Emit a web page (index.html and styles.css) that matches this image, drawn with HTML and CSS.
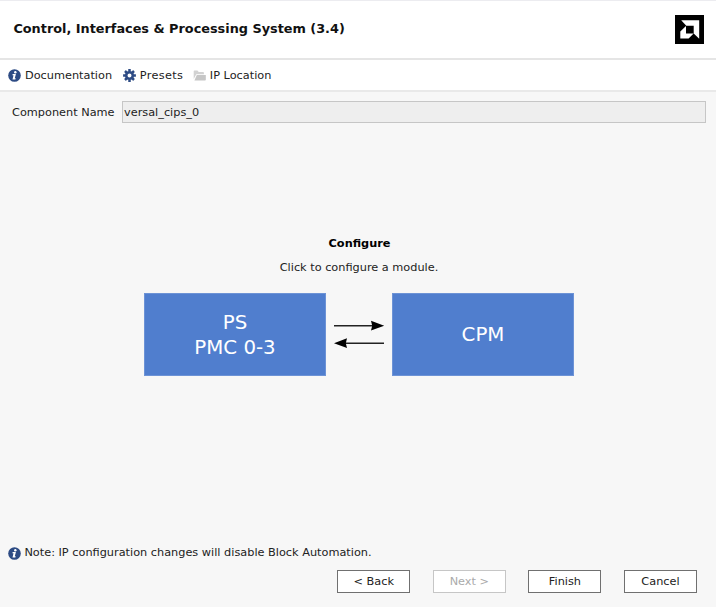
FILE: index.html
```html
<!DOCTYPE html>
<html lang="en">
<head>
<meta charset="utf-8">
<title>Control, Interfaces &amp; Processing System</title>
<link rel="stylesheet" href="styles.css">
</head>
<body>
<svg width="0" height="0" class="defs" aria-hidden="true">
  <symbol id="info" viewBox="0 0 13 13">
    <circle cx="6.5" cy="6.5" r="6.3" fill="#2d4b84"/>
    <circle cx="7.3" cy="3.2" r="1.2" fill="#fff"/>
    <path d="M4.7 5.1H7.9L6.8 9.2H7.7L7.4 10.4H4.5L5.5 6.3H4.4Z" fill="#fff"/>
  </symbol>
</svg>
<div class="dialog">
  <header class="header">
    <h1 class="title">Control, Interfaces &amp; Processing System (3.4)</h1>
    <svg class="logo" viewBox="0 0 29 29">
      <path d="M0 0H29V29H0Z" fill="#000"/>
      <path d="M6.2 5.3H24.2V23.7L18.7 18.5V10.7H11.3ZM11 11V18.6H18.6L13.6 23.6H5.3V16.4Z" fill="#fff"/>
    </svg>
  </header>
  <nav class="toolbar">
    <a class="tool"><svg class="icon" viewBox="0 0 13 13"><use href="#info"/></svg><span>Documentation</span></a>
    <a class="tool presets"><svg class="icon" viewBox="0 0 13 13">
      <g stroke="#2d4b84" fill="none">
        <circle cx="6.5" cy="6.5" r="3.3" stroke-width="2.6"/>
        <path d="M6.5 .1V2.6M6.5 10.4V12.9M.1 6.5H2.6M10.4 6.5H12.9M2 2L3.8 3.8M9.2 9.2L11 11M11 2L9.2 3.8M3.8 9.2L2 11" stroke-width="2.5"/>
      </g></svg><span>Presets</span></a>
    <a class="tool"><svg class="icon" viewBox="0 0 13 13">
      <path d="M.7 10V2.2Q.7 1.5 1.4 1.5H4.5L5.7 3H10.2Q10.9 3 10.9 3.8V5.2H3.3Z" fill="#d2d2d2"/>
      <path d="M3.8 6.1H12.8V10.8Q12.8 11.5 12 11.5H1.4Z" fill="#c6c6c6"/>
      </svg><span>IP Location</span></a>
  </nav>
  <div class="field">
    <label for="name">Component Name</label>
    <div class="input" id="name">versal_cips_0</div>
  </div>
  <main class="main">
    <h2 class="heading">Configure</h2>
    <p class="hint">Click to configure a module.</p>
    <div class="modules">
      <div class="module"><span>PS</span><span>PMC 0-3</span></div>
      <svg class="arrows" viewBox="0 0 66 82">
        <path d="M8 32.7H50M16 50.2H58" stroke="#222" stroke-width="1.4"/>
        <path d="M45 27.8L58.2 32.7L45 37.6L46.2 32.7ZM21 45.3L8 50.2L21 55.1L19.8 50.2Z" fill="#000"/>
      </svg>
      <div class="module"><span>CPM</span></div>
    </div>
  </main>
  <div class="note"><svg class="icon" viewBox="0 0 13 13"><use href="#info"/></svg><span>Note: IP configuration changes will disable Block Automation.</span></div>
  <footer class="footer">
    <button class="button">&lt; Back</button>
    <button class="button" disabled>Next &gt;</button>
    <button class="button">Finish</button>
    <button class="button">Cancel</button>
  </footer>
</div>
</body>
</html>
```
FILE: styles.css
```css
* { box-sizing: border-box; }
body {
  margin: 0;
  background: #f7f7f7;
  color: #222;
  font: 11.3px/16px "DejaVu Sans", sans-serif;
}
.defs { display: block; height: 0; }
.dialog { display: flex; flex-direction: column; width: 716px; height: 607px; overflow: hidden; }
.header {
  display: flex;
  align-items: center;
  justify-content: space-between;
  height: 60px;
  padding: 0 12px 0 13.4px;
  background: #fff;
  border-top: 1px solid #ececf0;
  border-bottom: 2px solid #e5e5e5;
}
.title { margin: 0 0 1px; font-size: 12.83px; line-height: 18px; color: #111; }
.logo { width: 29px; height: 29px; }
.toolbar {
  display: flex;
  align-items: center;
  gap: 11px;
  height: 32px;
  padding-left: 8.4px;
  background: #fff;
  border-bottom: 2px solid #e9e9e9;
}
.tool { display: flex; align-items: center; gap: 3.6px; }
.tool span { padding-top: 2px; }
.presets { margin-right: -1px; }
.presets span { letter-spacing: .35px; }
.icon { width: 13px; height: 13px; flex: none; }
.field { display: flex; align-items: center; gap: 8px; padding: 9px 10px 0 12px; }
.field label { width: 102px; padding-top: 2px; white-space: nowrap; }
.input {
  flex: 1;
  height: 22px;
  padding: 3px 1px;
  background: #eee;
  border: 1px solid #c6c6c6;
}
.main { flex: 1; padding-top: 113px; text-align: center; }
.heading { margin: 0 0 8px 3px; font-size: 11.3px; line-height: 16px; color: #000; }
.hint { margin: 0 0 17px 2px; }
.modules { display: flex; justify-content: center; padding-left: 2px; }
.module {
  display: flex;
  flex-direction: column;
  justify-content: center;
  width: 182px;
  height: 83px;
  padding-top: 2px;
  background: #507ece;
  border: 1px solid #6d93d6;
  color: #fff;
  font-size: 19.8px;
  line-height: 24.5px;
}
.arrows { width: 66px; height: 82px; }
.note { display: flex; align-items: center; gap: 3px; padding-left: 8.4px; height: 18px; }
.footer { display: flex; justify-content: flex-end; gap: 22.6px; padding: 8px 19px 14px; }
.button {
  width: 73px;
  height: 23px;
  padding: 0;
  background: #fff;
  border: 1px solid #707070;
  border-radius: 0;
  color: #222;
  font: inherit;
}
.button:disabled { color: #aaa; border-color: #c6c6c6; }
```
